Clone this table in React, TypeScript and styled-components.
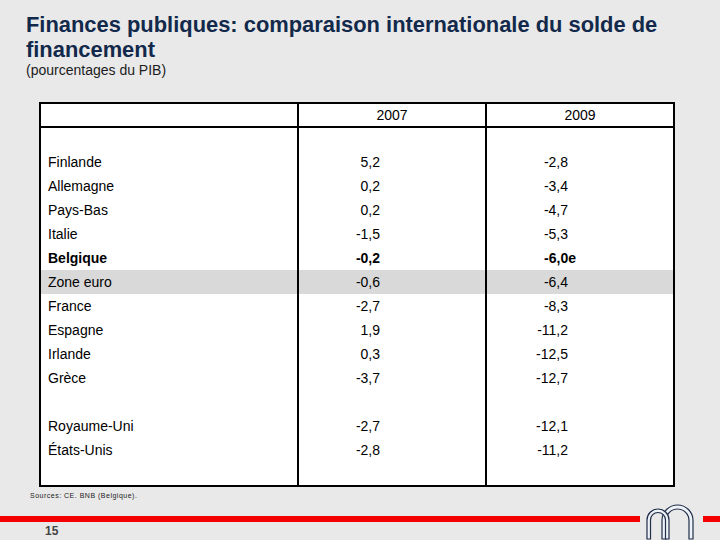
import React from "react";
import styled, { createGlobalStyle } from "styled-components";

const Global = createGlobalStyle`
  html, body { margin: 0; padding: 0; background: #e9e9e9; }
  body { font-family: "Liberation Sans", Arial, sans-serif; }
`;

const Page = styled.div`
  width: 720px;
  height: 540px;
  overflow: hidden;
  background: #e9e9e9;
  display: flex;
  flex-direction: column;
  box-sizing: border-box;
  padding-top: 12px;
`;

const Title = styled.h1`
  margin: 0 0 0 26px;
  width: 670px;
  font-size: 21.9px;
  line-height: 25px;
  font-weight: 700;
  color: #13294b;
`;

const Subtitle = styled.div`
  margin: 0 0 0 26px;
  font-size: 14px;
  line-height: 16px;
  color: #1c1c1c;
`;

const Table = styled.div`
  margin: 24px 0 0 39px;
  width: 636px;
  height: 385px;
  box-sizing: border-box;
  border: 2px solid #000;
  background: #fff;
  display: flex;
  flex-direction: column;
  color: #000;
  font-size: 14px;
`;

const HeaderRow = styled.div`
  display: grid;
  grid-template-columns: 258px 188px 1fr;
  height: 24px;
  box-sizing: border-box;
  border-bottom: 2px solid #000;
`;

const HeaderCell = styled.div<{ $divider?: boolean }>`
  box-sizing: border-box;
  border-right: ${(p) => (p.$divider ? "2px solid #000" : "none")};
  line-height: 22px;
  text-align: center;
`;

const Row = styled.div<{ $h: number; $shade?: boolean; $bold?: boolean }>`
  display: grid;
  grid-template-columns: 258px 188px 1fr;
  height: ${(p) => p.$h}px;
  line-height: ${(p) => p.$h}px;
  background: ${(p) => (p.$shade ? "#d9d9d9" : "transparent")};
  font-weight: ${(p) => (p.$bold ? 700 : 400)};
`;

const LabelCell = styled.div`
  box-sizing: border-box;
  border-right: 2px solid #000;
  padding-left: 7px;
  white-space: nowrap;
`;

const ValueCell = styled.div<{ $divider?: boolean }>`
  box-sizing: border-box;
  border-right: ${(p) => (p.$divider ? "2px solid #000" : "none")};
  padding-right: 105px;
  text-align: right;
  white-space: nowrap;
`;

const Suffix = styled.span`
  margin-right: -8px;
`;

const Sources = styled.div`
  margin: 4px 0 0 30px;
  font-size: 7px;
  line-height: 9px;
  letter-spacing: 0.5px;
  color: #222;
`;

const BottomBar = styled.div`
  margin-top: 4px;
  height: 36px;
  display: flex;
`;

const LeftPart = styled.div`
  width: 640px;
  display: flex;
  flex-direction: column;
  padding-top: 12px;
  box-sizing: border-box;
`;

const RightPart = styled.div`
  flex: 1;
  padding-top: 12px;
`;

const RedLine = styled.div`
  height: 6px;
  background: #f40000;
`;

const PageNum = styled.div`
  margin: 2px 0 0 45px;
  font-size: 12px;
  line-height: 14px;
  font-weight: 700;
  color: #444;
`;

const LogoSvg = styled.svg`
  display: block;
  flex: none;
`;

type Item = { label?: string; a?: string; b?: string; suffix?: string; bold?: boolean; shade?: boolean; h: number };

const rows: Item[] = [
  { h: 22 },
  { label: "Finlande", a: "5,2", b: "-2,8", h: 24 },
  { label: "Allemagne", a: "0,2", b: "-3,4", h: 24 },
  { label: "Pays-Bas", a: "0,2", b: "-4,7", h: 24 },
  { label: "Italie", a: "-1,5", b: "-5,3", h: 24 },
  { label: "Belgique", a: "-0,2", b: "-6,0", suffix: "e", bold: true, h: 24 },
  { label: "Zone euro", a: "-0,6", b: "-6,4", shade: true, h: 24 },
  { label: "France", a: "-2,7", b: "-8,3", h: 24 },
  { label: "Espagne", a: "1,9", b: "-11,2", h: 24 },
  { label: "Irlande", a: "0,3", b: "-12,5", h: 24 },
  { label: "Grèce", a: "-3,7", b: "-12,7", h: 24 },
  { h: 24 },
  { label: "Royaume-Uni", a: "-2,7", b: "-12,1", h: 24 },
  { label: "États-Unis", a: "-2,8", b: "-11,2", h: 24 },
  { h: 23 },
];

const arch = (x1: number, x2: number, top: number, t: number, bottom: number) => {
  const R = (x2 - x1) / 2;
  const cy = top + R;
  const r = R - t;
  return `M${x1},${bottom} L${x1},${cy} A${R},${R} 0 0 1 ${x2},${cy} L${x2},${bottom} L${x2 - t},${bottom} L${x2 - t},${cy} A${r},${r} 0 0 0 ${x1 + t},${cy} L${x1 + t},${bottom} Z`;
};

const Logo = () => (
  <LogoSvg width={63} height={36} viewBox="0 0 63 36">
    <path d={arch(22, 53, 1, 4, 35)} fill="#eef1f5" stroke="#1e2d4a" strokeWidth={1.2} strokeLinejoin="round" />
    <path d={arch(7, 29, 5, 3.5, 35)} fill="#eef1f5" stroke="#1e2d4a" strokeWidth={1.2} strokeLinejoin="round" />
  </LogoSvg>
);

export default function App() {
  return (
    <Page>
      <Global />
      <Title>Finances publiques: comparaison internationale du solde de financement</Title>
      <Subtitle>(pourcentages du PIB)</Subtitle>
      <Table>
        <HeaderRow>
          <HeaderCell $divider />
          <HeaderCell $divider>2007</HeaderCell>
          <HeaderCell>2009</HeaderCell>
        </HeaderRow>
        {rows.map((r, i) => (
          <Row key={i} $h={r.h} $shade={r.shade} $bold={r.bold}>
            <LabelCell>{r.label}</LabelCell>
            <ValueCell $divider>{r.a}</ValueCell>
            <ValueCell>
              {r.b}
              {r.suffix && <Suffix>{r.suffix}</Suffix>}
            </ValueCell>
          </Row>
        ))}
      </Table>
      <Sources>Sources: CE. BNB (Belgique).</Sources>
      <BottomBar>
        <LeftPart>
          <RedLine />
          <PageNum>15</PageNum>
        </LeftPart>
        <Logo />
        <RightPart>
          <RedLine />
        </RightPart>
      </BottomBar>
    </Page>
  );
}
